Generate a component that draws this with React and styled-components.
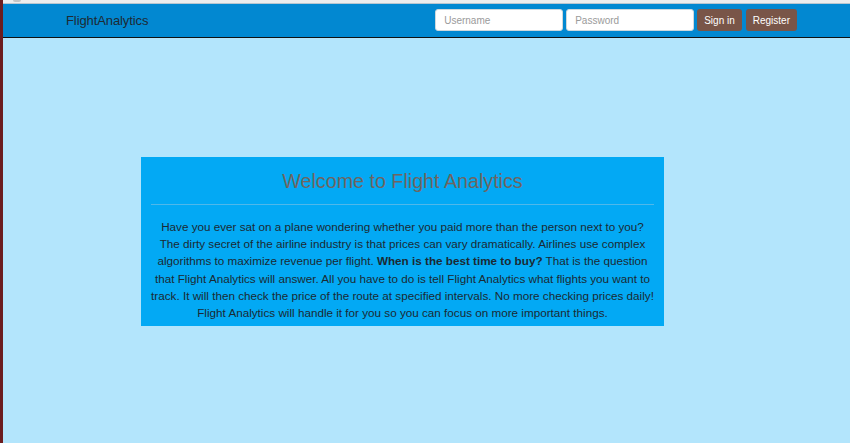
import React from "react";
import styled, { createGlobalStyle } from "styled-components";

const GlobalStyle = createGlobalStyle`
  html, body {
    margin: 0;
    padding: 0;
    height: 100%;
    background: #b3e5fc;
    font-family: "Liberation Sans", Arial, sans-serif;
  }
  #root {
    min-height: 100%;
  }
`;

const Page = styled.div`
  display: flex;
  min-height: 443px;
  background: #b3e5fc;
`;

const Edge = styled.div`
  width: 3px;
  flex-shrink: 0;
  background: #6b1d1f;
`;

const Main = styled.div`
  flex: 1;
  display: flex;
  flex-direction: column;
`;

const TopStrip = styled.div`
  height: 4px;
  background: #ededed;
  border-bottom: 1px solid #b8c6d0;
  box-sizing: border-box;
  padding-left: 10px;
  display: flex;
  align-items: flex-start;
`;

const Nub = styled.span`
  width: 8px;
  height: 2px;
  background: #c4c4c4;
  border-radius: 0 0 2px 2px;
`;

const Navbar = styled.nav`
  height: 34px;
  box-sizing: border-box;
  background: #0288d1;
  border-bottom: 1px solid #111;
  display: flex;
  align-items: center;
  padding: 0 53px 1px 63px;
`;

const Brand = styled.a`
  font-size: 13px;
  color: #1e2a33;
  text-decoration: none;
  letter-spacing: -0.1px;
`;

const LoginForm = styled.form`
  margin-left: auto;
  display: flex;
  align-items: center;
  gap: 3px;
`;

const Field = styled.input`
  width: 128px;
  height: 22px;
  box-sizing: border-box;
  border: 1px solid #cfd8dc;
  border-radius: 3px;
  padding: 0 8px;
  font-family: inherit;
  font-size: 10px;
  color: #333;
  background: #fff;
  &::placeholder {
    color: #9a9a9a;
  }
`;

const Button = styled.button`
  height: 22px;
  padding: 0 7px;
  margin-left: ${props => (props.spaced ? "1px" : "0")};
  border: none;
  border-radius: 3px;
  background: #795548;
  color: #fff;
  font-family: inherit;
  font-size: 10px;
  cursor: pointer;
`;

const Content = styled.main`
  flex: 1;
  padding: 119px 0 0 138px;
`;

const Card = styled.section`
  width: 523px;
  box-sizing: border-box;
  background: #03a9f4;
  padding: 11px 10px 5px;
  text-align: center;
`;

const Title = styled.h2`
  margin: 0;
  font-size: 19.7px;
  font-weight: 400;
  line-height: 26px;
  color: #6f6560;
`;

const Rule = styled.hr`
  margin: 10px 0 13px;
  border: none;
  border-top: 1px solid #4fb8ea;
`;

const Body = styled.p`
  margin: 0;
  font-size: 11.7px;
  line-height: 17.2px;
  color: #1b2a33;
`;

export default function App() {
  return (
    <>
      <GlobalStyle />
      <Page>
        <Edge />
        <Main>
          <TopStrip>
            <Nub />
          </TopStrip>
          <Navbar>
            <Brand href="#">FlightAnalytics</Brand>
            <LoginForm onSubmit={e => e.preventDefault()}>
              <Field type="text" placeholder="Username" />
              <Field type="password" placeholder="Password" />
              <Button type="submit">Sign in</Button>
              <Button type="button" spaced>Register</Button>
            </LoginForm>
          </Navbar>
          <Content>
            <Card>
              <Title>Welcome to Flight Analytics</Title>
              <Rule />
              <Body>
                Have you ever sat on a plane wondering whether you paid more than the person next to you?
                The dirty secret of the airline industry is that prices can vary dramatically. Airlines use
                complex algorithms to maximize revenue per flight. <b>When is the best time to buy?</b> That
                is the question that Flight Analytics will answer. All you have to do is tell Flight Analytics
                what flights you want to track. It will then check the price of the route at specified
                intervals. No more checking prices daily! Flight Analytics will handle it for you so you can
                focus on more important things.
              </Body>
            </Card>
          </Content>
        </Main>
      </Page>
    </>
  );
}
